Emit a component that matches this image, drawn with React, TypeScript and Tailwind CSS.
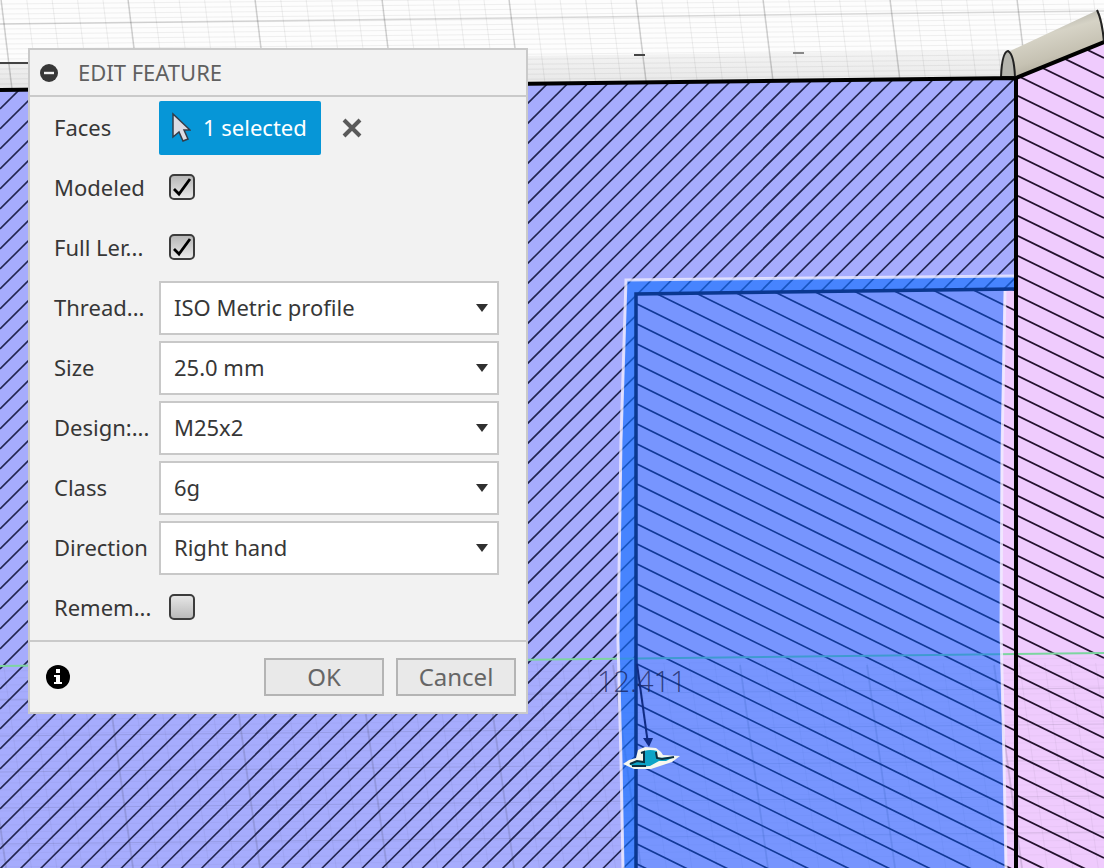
import { useState } from "react";

const range = (n: number) => Array.from({ length: n }, (_, i) => i);

const Viewport = () => (
  <svg
    className="absolute inset-0 h-full w-full"
    viewBox="0 0 1104 868"
    preserveAspectRatio="xMinYMin slice"
    aria-hidden="true"
  >
    <defs>
      <clipPath id="body">
        <path d="M0 90L1016 78V868H0Z" />
      </clipPath>
      <clipPath id="pink">
        <path d="M1016 77L1104 42V868H1016Z" />
      </clipPath>
      <clipPath id="hole">
        <path d="M637 294L1016 289V868H637Z" />
      </clipPath>
      <linearGradient id="tube" x1="0" y1="0" x2="0.4" y2="1">
        <stop offset="0.2" stopColor="#aeada5" />
        <stop offset="0.45" stopColor="#d6d3c6" />
        <stop offset="0.75" stopColor="#c6c2b3" />
        <stop offset="1" stopColor="#a9a595" />
      </linearGradient>
      <linearGradient id="edge" x1="0" y1="0" x2="0" y2="1">
        <stop offset="0" stopColor="#f4f4f4" />
        <stop offset="1" stopColor="#e6e6e6" />
      </linearGradient>
    </defs>

    <rect width="1104" height="868" fill="#fdfdfd" />
    <path d="M0 62L1016 50V78L0 90Z" fill="url(#edge)" />
    <g stroke="#000">
      {range(18).map((i) => (
        <path key={i} d={`M0 ${4 + i * 5}L1104 ${-6 + i * 5}`} opacity="0.05" />
      ))}
      {range(45).map((i) => (
        <path key={i} d={`M${-24 + i * 25.4} 0l11 90`} opacity="0.06" />
      ))}
      {range(9).map((i) => (
        <path key={i} d={`M${1 + i * 127} 0l11 90`} opacity="0.14" strokeWidth="1.5" />
      ))}
      <path d="M0 24L1104 11" opacity="0.14" strokeWidth="1.5" />
    </g>
    <path d="M0 63H30M634 55H645" stroke="#444" strokeWidth="2" />
    <path d="M793 53H804" stroke="#888" strokeWidth="2" />

    <path d="M0 90L1016 78V868H0Z" fill="#a6acfd" />
    <path d="M1016 77L1104 42V868H1016Z" fill="#efcbfd" />
    <g clipPath="url(#body)" stroke="#22254f" strokeWidth="1.6">
      {range(92).map((i) => (
        <path key={i} d={`M1016 ${-943 + i * 20}L0 ${69 + i * 20}`} />
      ))}
    </g>

    <path d="M637 294L1016 289V868H637Z" fill="#efcbfd" />
    <g clipPath="url(#hole)" stroke="#24122f" strokeWidth="1.7">
      {range(40).map((i) => (
        <path key={i} d={`M637 ${104 + i * 20}L1016 ${291 + i * 20}`} />
      ))}
    </g>
    <g clipPath="url(#pink)" stroke="#24122f" strokeWidth="1.9">
      {range(45).map((i) => (
        <path key={i} d={`M1016 ${15 + i * 20}l88 43`} />
      ))}
    </g>

    <g stroke="#334">
      {range(29).map((i) => (
        <path key={i} d={`M0 ${671 + i * 7}L1104 ${658 + i * 7}`} opacity="0.03" />
      ))}
      {range(45).map((i) => (
        <path key={i} d={`M${-22 + i * 25.4} 663l28 205`} opacity="0.05" />
      ))}
      {range(5).map((i) => (
        <path key={i} d={`M0 ${700 + i * 36}L1104 ${688 + i * 36}`} opacity="0.12" />
      ))}
      {range(9).map((i) => (
        <path key={i} d={`M${-22 + i * 127} 665l28 203`} strokeWidth="2" opacity="0.12" />
      ))}
    </g>
    <path d="M0 666L1104 653" stroke="#7dd5a0" strokeWidth="2" />

    <path
      d="M627 280L1014 276V289L1004 291L1001 450L1000 630L1003 760L1005 868H624L622 760L619 640L622 440Z"
      fill="#0060ff"
      fillOpacity="0.5"
    />
    <path
      d="M636 868V294L1014 289V277L627 281L622 440L619 640L622 760L624 868Z"
      fill="#2a82ff"
      fillOpacity="0.3"
    />
    <path
      d="M623 868L621 760L618 640L621 440L626 280L1014 276M1005 291L1002 450L1001 630L1004 760L1006 868"
      fill="none"
      stroke="#f0ecff"
      strokeOpacity="0.8"
      strokeWidth="3"
    />
    <path d="M636 868V294L1014 289" fill="none" stroke="#0a3790" strokeWidth="3.5" />

    <path d="M1010 51L1098 10Q1104 20 1104 42L1016 77Z" fill="url(#tube)" />
    <path d="M1001 77Q1002 52 1008 51Q1014 54 1015 77Z" fill="#b5b5ae" stroke="#222" strokeWidth="2" />
    <path d="M1097 10Q1102 20 1104 42" fill="none" stroke="#222" strokeWidth="2" />
    <path d="M0 90L1016 78L1104 42M1016 77V868" fill="none" stroke="#000" strokeWidth="4" />

    <text
      x="597"
      y="692"
      className="font-['Open_Sans',sans-serif] text-[29px] font-light"
      fill="#141d55"
      fillOpacity="0.75"
    >
      12.411
    </text>
    <path d="M637 664L648 744" stroke="#102b83" strokeWidth="2" />
    <path d="M643 738h10l-4 9z" fill="#102b83" />
    <path
      d="M623 764L629 760L636 758L638 750L645 747L656 748L661 752L663 755L680 756L672 762L651 769L634 769Z"
      fill="#f7f7ee"
    />
    <path
      d="M629 764L637 761L644 762V751Q650 749 657 751V758L674 757L666 761L659 761L650 766L634 767Z"
      fill="#0da4c7"
    />
    <path
      d="M630 764L637 761L644 762V752L641 753M656 752L657 758L662 759L674 757M632 766H646"
      fill="none"
      stroke="#0b3040"
      strokeWidth="2"
    />
  </svg>
);

interface RowLabelProps {
  id: string;
  label: string;
}

const RowLabel = ({ id, label }: RowLabelProps) => (
  <label htmlFor={id} className="w-[105px] shrink-0 pb-[2px] whitespace-nowrap">
    {label}
  </label>
);

interface CheckRowProps extends RowLabelProps {
  initial?: boolean;
}

const CheckRow = ({ id, label, initial = false }: CheckRowProps) => {
  const [checked, setChecked] = useState(initial);

  return (
    <div className="flex h-[60px] items-center">
      <RowLabel id={id} label={label} />
      <span className="relative mb-[2px] ml-[10px] h-[26px] w-[26px]">
        <input
          id={id}
          type="checkbox"
          checked={checked}
          onChange={(e) => setChecked(e.target.checked)}
          className="block h-full w-full appearance-none rounded-[5px] border-2 border-[#3c3c3c] bg-linear-to-b from-[#e6e6e6] to-[#bababa] checked:from-[#b8b8b8] checked:to-[#e8e8e8]"
        />
        {checked && (
          <svg className="pointer-events-none absolute inset-0" viewBox="0 0 26 26" fill="none">
            <path d="M5 15L10 20L21 5" stroke="#000" strokeWidth="2.8" />
          </svg>
        )}
      </span>
    </div>
  );
};

interface SelectRowProps extends RowLabelProps {
  value: string;
}

const SelectRow = ({ id, label, value }: SelectRowProps) => (
  <div className="flex h-[60px] items-center">
    <RowLabel id={id} label={label} />
    <span className="relative flex-1">
      <select
        id={id}
        className="block h-[54px] w-full appearance-none border-2 border-[#c8c8c8] bg-white pr-9 pb-[2px] pl-[13px]"
      >
        <option>{value}</option>
      </select>
      <svg
        className="pointer-events-none absolute top-[23px] right-[11px] h-2 w-3"
        viewBox="0 0 12 8"
      >
        <path d="M0 0H12L6 8Z" fill="#303030" />
      </svg>
    </span>
  </div>
);

const selects: SelectRowProps[] = [
  { id: "thread", label: "Thread...", value: "ISO Metric profile" },
  { id: "size", label: "Size", value: "25.0 mm" },
  { id: "designation", label: "Design:...", value: "M25x2" },
  { id: "class", label: "Class", value: "6g" },
  { id: "direction", label: "Direction", value: "Right hand" },
];

const EditFeature = () => (
  <section
    aria-label="Edit feature"
    className="absolute top-12 left-7 w-[500px] border-2 border-[#cacaca] bg-[#f2f2f2] text-[22px] leading-7 text-[#373737]"
  >
    <header className="flex h-[47px] items-center gap-5 border-b-2 border-[#cacaca] pl-[10px]">
      <button type="button" aria-label="Collapse">
        <svg className="h-[18px] w-[18px]" viewBox="0 0 18 18">
          <circle cx="9" cy="9" r="9" fill="#373737" />
          <path d="M4 9H14" stroke="#f2f2f2" strokeWidth="2.4" />
        </svg>
      </button>
      <h1 className="pb-[2px] text-[#606060]">EDIT FEATURE</h1>
    </header>

    <form onSubmit={(e) => e.preventDefault()}>
      <div className="pt-px pr-[27px] pb-[2px] pl-6">
        <div className="flex h-[60px] items-center">
          <RowLabel id="faces" label="Faces" />
          <button
            id="faces"
            type="button"
            className="flex h-[54px] w-[162px] items-center gap-3 rounded-[2px] bg-[#0696d7] pb-[2px] pl-[13px] whitespace-nowrap text-white"
          >
            <svg className="h-[30px] w-[19px] shrink-0" viewBox="0 0 19 30">
              <path
                d="M1 2V25L7 20L11 29L16 27L12 18L18 18Z"
                fill="#dcdce4"
                stroke="#343c48"
                strokeWidth="1.5"
              />
            </svg>
            1 selected
          </button>
          <button type="button" aria-label="Clear selection" className="ml-[21px]">
            <svg className="h-5 w-5" viewBox="0 0 20 20">
              <path d="M2 2L18 18M18 2L2 18" stroke="#5a5a5a" strokeWidth="4" />
            </svg>
          </button>
        </div>
        <CheckRow id="modeled" label="Modeled" initial />
        <CheckRow id="full-length" label="Full Ler..." initial />
        {selects.map((row) => (
          <SelectRow key={row.id} {...row} />
        ))}
        <CheckRow id="remember" label="Remem..." />
      </div>

      <footer className="flex h-[72px] items-center gap-3 border-t-2 border-[#cacaca] pr-[10px] pl-4">
        <button type="button" aria-label="Information" className="mr-auto">
          <svg className="h-6 w-6" viewBox="0 0 24 24">
            <circle cx="12" cy="12" r="12" fill="#000" />
            <path d="M10 4h4v4h-4zM8 10h6v7h2v2H8v-2h2v-5H8z" fill="#fff" />
          </svg>
        </button>
        <button
          type="submit"
          className="h-[38px] w-[120px] border-2 border-[#b4b4b4] bg-[#e9e9e9] text-2xl leading-7 text-[#666]"
        >
          OK
        </button>
        <button
          type="button"
          className="h-[38px] w-[120px] border-2 border-[#b4b4b4] bg-[#e9e9e9] text-2xl leading-7 text-[#666]"
        >
          Cancel
        </button>
      </footer>
    </form>
  </section>
);

const App = () => (
  <main className="relative min-h-screen overflow-hidden font-['Noto_Sans',sans-serif]">
    <Viewport />
    <EditFeature />
  </main>
);

export default App;
